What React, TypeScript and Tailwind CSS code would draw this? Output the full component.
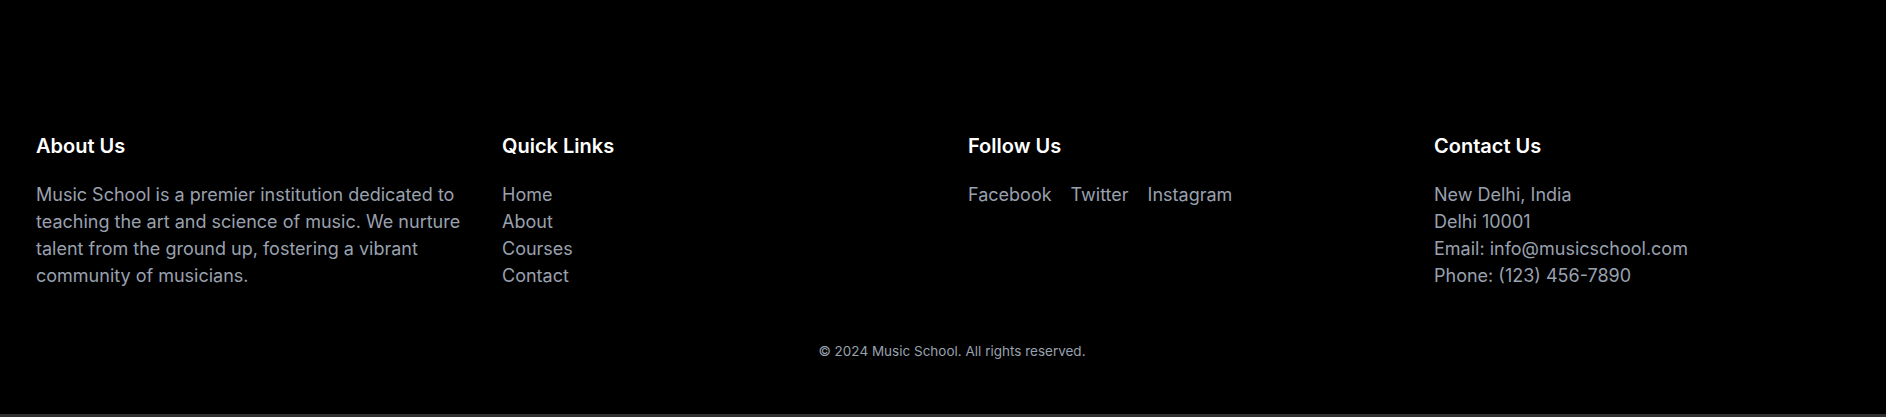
const quickLinks = ["Home", "About", "Courses", "Contact"];
const socials = ["Facebook", "Twitter", "Instagram"];
const contact = [
  "New Delhi, India",
  "Delhi 10001",
  "Email: info@musicschool.com",
  "Phone: (123) 456-7890",
];

function Heading({ children }: { children: string }) {
  return <h3 className="text-xl leading-7 font-semibold text-white mb-[21px]">{children}</h3>;
}

export default function App() {
  return (
    <div className="bg-[#303030] pb-[3px] font-['Inter',sans-serif]">
      <footer className="bg-black pt-[132px] pb-[53px] pl-9 pr-[18px]">
        <div className="grid grid-cols-4 gap-8 text-lg leading-[27px] text-gray-400">
          <div>
            <Heading>About Us</Heading>
            <p>
              Music School is a premier institution dedicated to teaching the art and science of
              music. We nurture talent from the ground up, fostering a vibrant community of
              musicians.
            </p>
          </div>
          <div>
            <Heading>Quick Links</Heading>
            <ul>
              {quickLinks.map((l) => (
                <li key={l}>
                  <a href="#" className="hover:text-white">{l}</a>
                </li>
              ))}
            </ul>
          </div>
          <div>
            <Heading>Follow Us</Heading>
            <div className="flex gap-[19px]">
              {socials.map((s) => (
                <a key={s} href="#" className="hover:text-white">{s}</a>
              ))}
            </div>
          </div>
          <div>
            <Heading>Contact Us</Heading>
            {contact.map((c) => (
              <p key={c}>{c}</p>
            ))}
          </div>
        </div>
        <p className="mt-[52px] text-center text-[13.5px] leading-5 text-gray-400">
          © 2024 Music School. All rights reserved.
        </p>
      </footer>
    </div>
  );
}
